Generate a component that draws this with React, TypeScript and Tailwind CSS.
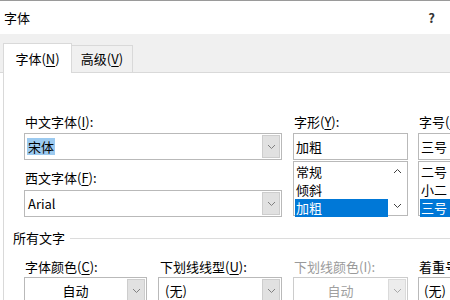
import React from "react";

const font = { fontFamily: "'Noto Sans CJK SC', 'Noto Sans', sans-serif" };

const Chevron = ({ up = false, color = "#606060" }: { up?: boolean; color?: string }) => (
  <svg width="9" height="6" viewBox="0 0 9 6" className="block">
    <path
      d={up ? "M1 5 L4.5 1.5 L8 5" : "M1 1 L4.5 4.5 L8 1"}
      fill="none"
      stroke={color}
      strokeWidth="1"
    />
  </svg>
);

const Key = ({ k }: { k: string }) => (
  <>
    (<span className="underline underline-offset-2">{k}</span>):
  </>
);

interface ComboProps {
  text: React.ReactNode;
  width: string;
  center?: boolean;
  disabled?: boolean;
}

// editable/dropdown box with a grey button on the right
const Combo: React.FC<ComboProps> = ({ text, width, center, disabled }) => (
  <div
    className={`${width} h-[27px] shrink-0 flex border ${
      disabled ? "border-[#cccccc]" : "border-[#b9b9b9]"
    } bg-white`}
  >
    <div
      className={`flex-1 flex items-center text-[13px] leading-[16px] ${
        center ? "justify-center" : "pl-[2px]"
      } ${disabled ? "text-[#a0a0a0]" : "text-black"}`}
    >
      {text}
    </div>
    <div
      className={`w-[18px] m-px flex items-center justify-center border ${
        disabled ? "bg-[#ececec] border-[#dadada]" : "bg-[#e1e1e1] border-[#cdcdcd]"
      }`}
    >
      <Chevron color={disabled ? "#a8a8a8" : "#808080"} />
    </div>
  </div>
);

const Label: React.FC<{ children: React.ReactNode; grey?: boolean }> = ({ children, grey }) => (
  <div
    className={`h-[16px] shrink-0 pl-px text-[13px] leading-[16px] whitespace-nowrap ${
      grey ? "text-[#9a9a9a]" : "text-black"
    }`}
  >
    {children}
  </div>
);

const ListBox: React.FC<{ items: string[]; selected: number; scroll?: boolean; width: string }> = ({
  items,
  selected,
  scroll,
  width,
}) => (
  <div className={`${width} h-[55px] shrink-0 mt-px border border-[#b9b9b9] flex bg-white`}>
    <div className="flex-1 flex flex-col pt-px pl-px">
      {items.map((it, i) => (
        <div
          key={it}
          className={`h-[18px] shrink-0 pl-[1px] text-[13px] leading-[18px] ${
            i === selected ? "bg-[#0078d7] text-white" : "text-black"
          }`}
        >
          {it}
        </div>
      ))}
    </div>
    {scroll && (
      <div className="w-[19px] flex flex-col justify-between items-center py-[6px]">
        <Chevron up color="#404040" />
        <Chevron color="#404040" />
      </div>
    )}
  </div>
);

export default function App() {
  return (
    <div className="w-[450px] h-[300px] overflow-hidden bg-white flex flex-col" style={font}>
      <div className="h-px shrink-0 bg-[#9a9a9a]" />
      {/* title bar */}
      <div className="h-[33px] shrink-0 flex items-center justify-between pl-[4px] pr-[15px]">
        <span className="text-[13px] leading-[16px]">字体</span>
        <span className="text-[13px] leading-[16px] font-bold text-[#333]">?</span>
      </div>
      {/* tab strip */}
      <div className="h-[39px] shrink-0 bg-[#f0f0f0] flex items-end pl-[3px] border-b border-[#d9d9d9]">
        <div className="w-[69px] h-[30px] -mb-px bg-white border-l border-t border-r border-[#d9d9d9] flex items-center justify-center text-[13px] leading-[16px]">
          字体(<span className="underline underline-offset-2">N</span>)
        </div>
        <div className="w-[61px] h-[27px] bg-[#f0f0f0] border-t border-r border-[#d9d9d9] flex items-center justify-center text-[13px] leading-[16px]">
          高级(<span className="underline underline-offset-2">V</span>)
        </div>
      </div>
      {/* content */}
      <div className="flex-1 shrink-0 ml-[3px] border-l border-[#d9d9d9] flex flex-col pt-[41px]">
        <div className="flex shrink-0 pl-[20px]">
          <div className="w-[258px] flex flex-col">
            <Label>
              中文字体<Key k="I" />
            </Label>
            <div className="mt-[3px]">
              <Combo
                width="w-[258px]"
                text={<span className="bg-[#9ccaf0] px-px leading-[17px]">宋体</span>}
              />
            </div>
            <div className="mt-[10px]">
              <Label>
                西文字体<Key k="F" />
              </Label>
            </div>
            <div className="mt-[4px]">
              <Combo width="w-[258px]" text={<span className="pl-px">Arial</span>} />
            </div>
          </div>
          <div className="w-[115px] ml-[11px] flex flex-col">
            <Label>
              字形<Key k="Y" />
            </Label>
            <div className="mt-[3px] w-[115px] h-[27px] shrink-0 border border-[#b9b9b9] flex items-center pl-[2px] text-[13px] leading-[16px]">
              加粗
            </div>
            <ListBox width="w-[115px]" items={["常规", "倾斜", "加粗"]} selected={2} scroll />
          </div>
          <div className="w-[60px] ml-[10px] flex flex-col shrink-0">
            <Label>
              字号<Key k="S" />
            </Label>
            <div className="mt-[3px] w-[60px] h-[27px] shrink-0 border border-[#b9b9b9] flex items-center pl-[2px] text-[13px] leading-[16px]">
              三号
            </div>
            <ListBox width="w-[60px]" items={["二号", "小二", "三号"]} selected={2} />
          </div>
        </div>
        {/* group */}
        <div className="mt-[13px] shrink-0 flex items-center pl-[9px]">
          <span className="text-[13px] leading-[16px]">所有文字</span>
          <div className="flex-1 ml-[5px] h-px bg-[#dcdcdc]" />
        </div>
        <div className="mt-[13px] shrink-0 flex pl-[20px]">
          <div className="w-[123px] flex flex-col">
            <Label>
              字体颜色<Key k="C" />
            </Label>
            <div className="mt-[2px]">
              <Combo width="w-[123px]" text="自动" center />
            </div>
          </div>
          <div className="w-[124px] ml-[11px] flex flex-col">
            <div className="pl-[1px]">
              <Label>
                下划线线型<Key k="U" />
              </Label>
            </div>
            <div className="mt-[2px]">
              <Combo width="w-[124px]" text={<span className="pl-[4px]">(无)</span>} />
            </div>
          </div>
          <div className="w-[115px] ml-[11px] flex flex-col">
            <Label grey>下划线颜色(I):</Label>
            <div className="mt-[2px]">
              <Combo width="w-[115px]" text="自动" center disabled />
            </div>
          </div>
          <div className="w-[60px] ml-[10px] flex flex-col shrink-0">
            <Label>着重号(·):</Label>
            <div className="mt-[2px] w-[60px] h-[27px] shrink-0 border border-[#b9b9b9] flex items-center pl-[5px] text-[13px] leading-[16px]">
              (无)
            </div>
          </div>
        </div>
      </div>
    </div>
  );
}
